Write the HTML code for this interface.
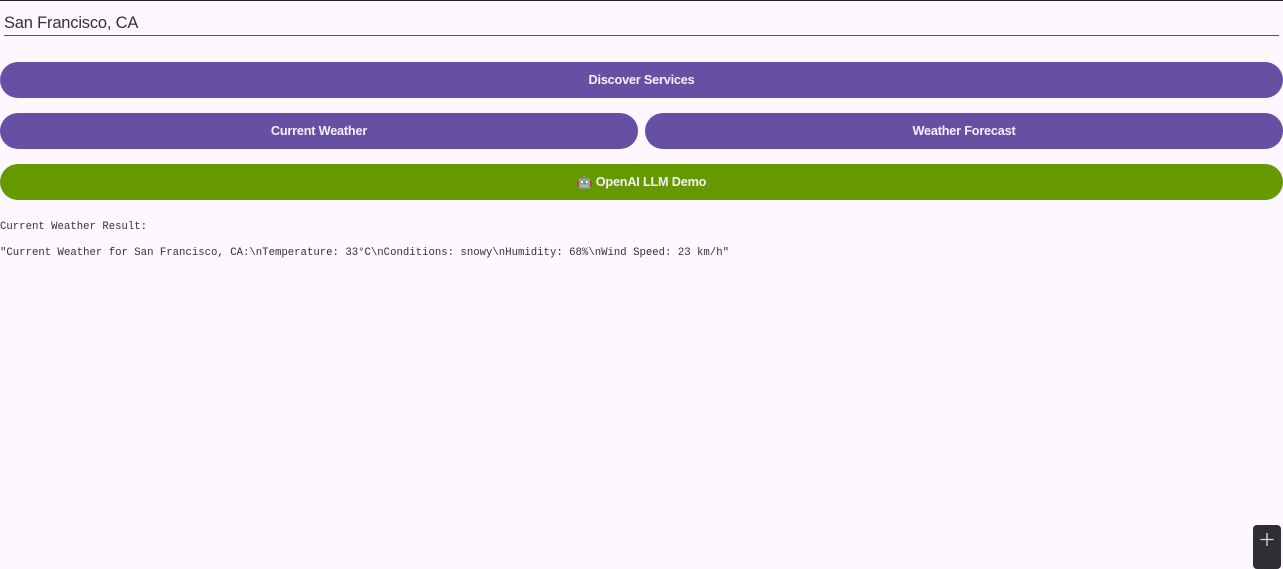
<!DOCTYPE html>
<html><head><style>
html,body{margin:0;padding:0;}
body{width:1283px;height:565px;background:#fdf7ff;position:relative;overflow:hidden;font-family:"Liberation Sans",sans-serif;}
.top{position:absolute;left:0;top:0;width:1283px;height:1px;background:#222;}
.inp{position:absolute;left:4px;top:11px;width:1275px;height:24px;border-bottom:1px solid #555;font-size:16.5px;color:#333;line-height:24px;letter-spacing:-0.2px;}
.btn{position:absolute;height:36px;border-radius:18px;background:#6750a4;color:#f4f0fa;font-weight:bold;font-size:12.7px;letter-spacing:-0.2px;display:flex;align-items:center;justify-content:center;}
.mono{position:absolute;left:0;font-family:"Liberation Mono",monospace;font-size:10.66px;color:#333;white-space:pre;}
.fab{position:absolute;left:1253px;top:525px;width:28px;height:44px;background:#2d2f33;border-radius:4px;}
</style></head><body>
<div class="top"></div>
<div class="inp">San Francisco, CA</div>
<div class="btn" style="left:0;top:62px;width:1283px;">Discover Services</div>
<div class="btn" style="left:0;top:113px;width:638px;">Current Weather</div>
<div class="btn" style="left:645px;top:113px;width:638px;">Weather Forecast</div>
<div class="btn" style="left:0;top:164px;width:1283px;background:#669900;">🤖 OpenAI LLM Demo</div>
<div class="mono" style="top:221px;">Current Weather Result:</div>
<div class="mono" style="top:247px;">"Current Weather for San Francisco, CA:\nTemperature: 33°C\nConditions: snowy\nHumidity: 68%\nWind Speed: 23 km/h"</div>
<div class="fab"><svg width="28" height="30" viewBox="0 0 28 30"><path d="M14 8v13M7.5 14.5h13" stroke="#ddd" stroke-width="1.3"/></svg></div>
</body></html>
